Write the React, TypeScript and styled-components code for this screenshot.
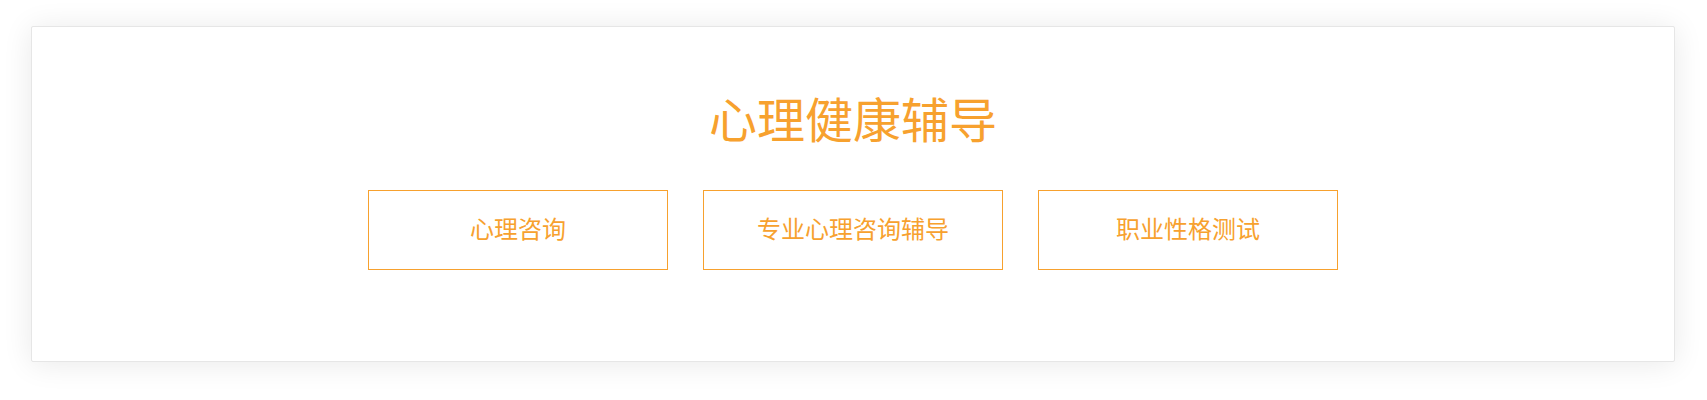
import React from "react";
import styled, { createGlobalStyle } from "styled-components";

const Global = createGlobalStyle`
  html, body { margin: 0; padding: 0; background: #ffffff; }
  body { font-family: "Noto Sans CJK SC", "Noto Sans", sans-serif; }
`;

const Page = styled.div`
  padding: 26px 32px 38px 31px;
`;

const Card = styled.section`
  box-sizing: border-box;
  height: 336px;
  background: #ffffff;
  border: 1px solid #e6e6e6;
  border-radius: 2px;
  box-shadow: 0 2px 30px rgba(0, 0, 0, 0.09);
  display: flex;
  flex-direction: column;
  align-items: center;
  padding-top: 66px;
`;

const Title = styled.h2`
  margin: 0;
  font-size: 48px;
  line-height: 48px;
  font-weight: 400;
  color: #f7a12e;
  font-family: "Noto Sans CJK SC", sans-serif;
`;

const Row = styled.div`
  display: flex;
  gap: 35px;
  margin-top: 49px;
`;

const Box = styled.a`
  box-sizing: border-box;
  width: 300px;
  height: 80px;
  padding-bottom: 4px;
  border: 1px solid #f7a12e;
  display: flex;
  align-items: center;
  justify-content: center;
  font-size: 24px;
  line-height: 30px;
  color: #f7a12e;
  text-decoration: none;
  font-family: "Noto Sans CJK SC", sans-serif;
`;

const items = ["心理咨询", "专业心理咨询辅导", "职业性格测试"];

export default function App() {
  return (
    <>
      <Global />
      <Page>
        <Card>
          <Title>心理健康辅导</Title>
          <Row>
            {items.map((t) => (
              <Box key={t} href="#">
                {t}
              </Box>
            ))}
          </Row>
        </Card>
      </Page>
    </>
  );
}
